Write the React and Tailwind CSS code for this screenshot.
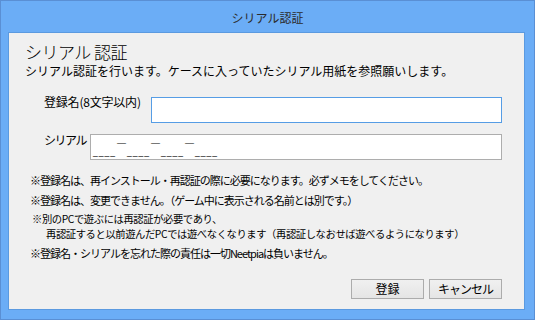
import React from "react";

const jp = { fontFamily: '"Noto Sans CJK JP", "Noto Sans", sans-serif' };

function SerialMask() {
  // placeholder mask shown in the serial field: ____-____-____-____
  const groups = [0, 1, 2, 3];
  return (
    <div
      className="flex items-end h-full pl-[2px] pb-[1px] text-black"
      style={{ fontFamily: '"Liberation Sans", sans-serif' }}
    >
      {groups.map((g) => (
        <React.Fragment key={g}>
          <span className="w-[23px] text-[8.5px] leading-[12px] tracking-[1px] whitespace-pre">____</span>
          {g < 3 && (
            <span className="w-[11px] text-center text-[9px] leading-[12px] relative -top-[9px]">—</span>
          )}
        </React.Fragment>
      ))}
    </div>
  );
}

export default function App() {
  return (
    <div className="w-[535px] h-[320px] bg-[#6badf6] border border-[#5a8fd4] flex flex-col" style={jp}>
      {/* title bar */}
      <div className="h-[31px] flex items-center justify-center pt-[2px] text-[12px] text-[#2b2b2b]">
        シリアル認証
      </div>

      {/* client area */}
      <div className="flex-1 ml-[7px] mr-[9px] mb-[9px] border border-[#5b9ae0] bg-[#f0f0f0] flex flex-col text-black">
        <div className="mt-[9px] ml-[16px] text-[17px] leading-[20px] tracking-[-0.5px] font-light">
          シリアル 認証
        </div>
        <div className="mt-[1px] ml-[16px] text-[12px] leading-[16px]">
          シリアル認証を行います。ケースに入っていたシリアル用紙を参照願いします。
        </div>

        <div className="mt-[18px] flex items-start">
          <div className="ml-[35px] w-[107px] -mt-[2px] text-[12px] leading-[14px] tracking-[-0.2px]">
            登録名(8文字以内)
          </div>
          <div className="w-[351px] h-[26px] border border-[#569de5] bg-white" />
        </div>

        <div className="mt-[11px] flex items-start">
          <div className="ml-[35px] w-[46px] -mt-[1px] text-[12px] leading-[14px] tracking-[-1.5px]">
            シリアル
          </div>
          <div className="w-[412px] h-[26px] border border-[#adadad] bg-white">
            <SerialMask />
          </div>
        </div>

        <div className="mt-[12px] ml-[21px] text-[11px] tracking-[-1px]">
          <p className="leading-[16px]">
            ※登録名は、再インストール・再認証の際に必要になります。必ずメモをしてください。
          </p>
          <p className="mt-[4px] leading-[16px]">
            ※登録名は、変更できません。（ゲーム中に表示される名前とは別です。）
          </p>
          <div className="mt-[3px] ml-[2px] text-[10.3px] leading-[15px] tracking-[-0.4px]">
            <p>※別のPCで遊ぶには再認証が必要であり、</p>
            <p className="ml-[14px]">
              再認証すると以前遊んだPCでは遊べなくなります（再認証しなおせば遊べるようになります）
            </p>
          </div>
          <p className="mt-[4px] leading-[16px]">
            ※登録名・シリアルを忘れた際の責任は一切Neetpiaは負いません。
          </p>
        </div>

        <div className="mt-auto mb-[10px] mr-[22px] flex justify-end gap-[5px]">
          <button className="w-[73px] h-[20px] border border-[#acacac] bg-gradient-to-b from-[#f0f0f0] to-[#e5e5e5] text-[12px] leading-[18px] text-black">
            登録
          </button>
          <button className="w-[73px] h-[20px] border border-[#acacac] bg-gradient-to-b from-[#f0f0f0] to-[#e5e5e5] text-[12px] leading-[18px] text-black tracking-[-1px]">
            キャンセル
          </button>
        </div>
      </div>
    </div>
  );
}
